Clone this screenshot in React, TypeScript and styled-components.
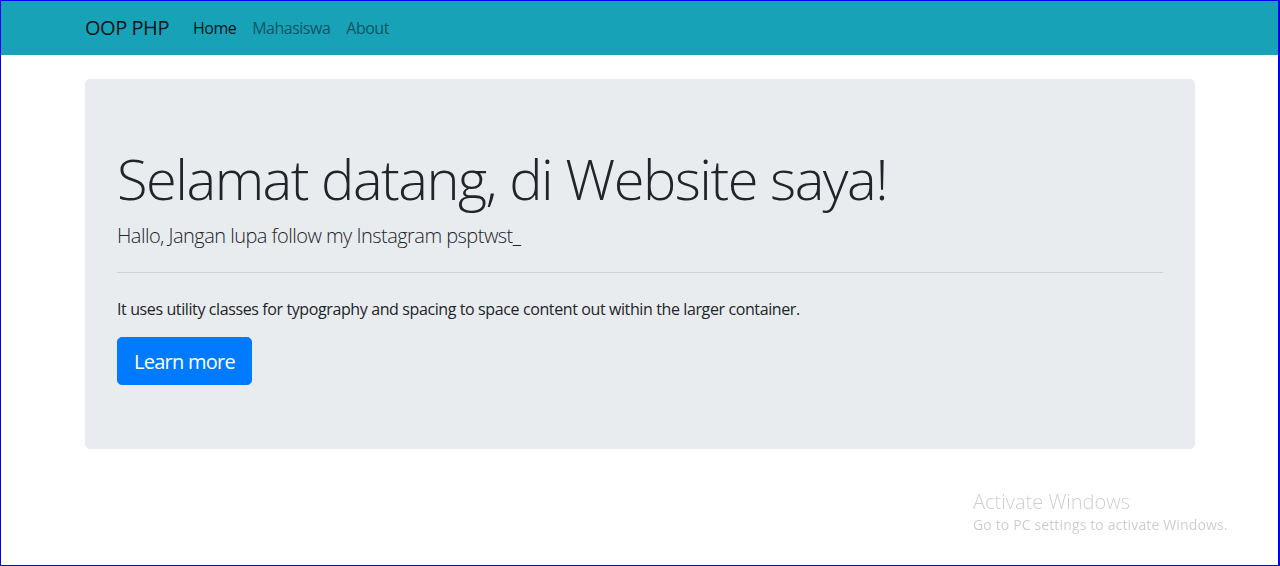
import React from "react";
import styled, { createGlobalStyle } from "styled-components";

const FONT = `"Open Sans", "Noto Sans", "Liberation Sans", sans-serif`;

const Global = createGlobalStyle`
  html, body { margin: 0; padding: 0; }
  body {
    font-family: ${FONT};
    font-size: 16px;
    line-height: 1.5;
    color: #212529;
    background: #fff;
  }
  *, *::before, *::after { box-sizing: border-box; }
`;

const Frame = styled.div`
  position: fixed;
  inset: 0;
  border: 1px solid #0000ff;
  border-right-width: 2px;
  pointer-events: none;
  z-index: 10;
`;

const Container = styled.div`
  max-width: 1140px;
  margin: 0 auto;
  padding: 0 15px;
`;

const NavBar = styled.nav`
  background: #17a2b8;
  height: 55px;
  padding-top: 1px;
`;

const NavInner = styled(Container)`
  display: flex;
  align-items: center;
  height: 100%;
`;

const Brand = styled.a`
  font-size: 20px;
  line-height: 30px;
  letter-spacing: -0.45px;
  color: rgba(0, 0, 0, 0.9);
  margin-right: 16px;
  text-decoration: none;
`;

const NavList = styled.div`
  display: flex;
`;

const NavLink = styled.a<{ $active?: boolean }>`
  padding: 8px;
  font-size: 16px;
  line-height: 24px;
  letter-spacing: -0.5px;
  text-decoration: none;
  color: ${(p) => (p.$active ? "rgba(0,0,0,0.9)" : "rgba(0,0,0,0.5)")};
`;

const Jumbotron = styled.div`
  margin-top: 24px;
  background: #e9ecef;
  border-radius: 4.8px;
  padding: 64px 32px;
`;

const Display = styled.h1`
  margin: 0 0 8px;
  padding-top: 3px;
  font-size: 56px;
  font-weight: 300;
  line-height: 64.2px;
  letter-spacing: -1.5px;
`;

const Lead = styled.p`
  margin: 0 0 16px;
  padding-top: 5px;
  font-size: 20px;
  font-weight: 300;
  line-height: 25px;
  letter-spacing: -0.53px;
`;

const Rule = styled.hr`
  margin: 24px 0;
  border: 0;
  border-top: 1px solid rgba(0, 0, 0, 0.1);
`;

const Text = styled.p`
  margin: 0 0 16px;
  padding-top: 1px;
  font-size: 16px;
  line-height: 23px;
  letter-spacing: -0.39px;
`;

const Button = styled.a`
  display: inline-block;
  background: #007bff;
  border: 1px solid #007bff;
  color: #fff;
  font-size: 20px;
  line-height: 28px;
  letter-spacing: -0.75px;
  padding: 10px 16px 8px;
  border-radius: 4.8px;
  text-decoration: none;
`;

const Watermark = styled.div`
  position: fixed;
  left: 973px;
  top: 489px;
  color: rgba(0, 0, 0, 0.2);
  pointer-events: none;
`;

const WmTitle = styled.div`
  font-size: 20px;
  font-weight: 300;
  line-height: 26px;
`;

const WmSub = styled.div`
  font-size: 14px;
  line-height: 20px;
  letter-spacing: 0.01em;
`;

export default function App() {
  return (
    <>
      <Global />
      <NavBar>
        <NavInner>
          <Brand href="#">OOP PHP</Brand>
          <NavList>
            <NavLink href="#" $active>Home</NavLink>
            <NavLink href="#">Mahasiswa</NavLink>
            <NavLink href="#">About</NavLink>
          </NavList>
        </NavInner>
      </NavBar>
      <Container>
        <Jumbotron>
          <Display>Selamat datang, di Website saya!</Display>
          <Lead>Hallo, Jangan lupa follow my Instagram psptwst_</Lead>
          <Rule />
          <Text>
            It uses utility classes for typography and spacing to space content out within the larger container.
          </Text>
          <Button href="#">Learn more</Button>
        </Jumbotron>
      </Container>
      <Watermark>
        <WmTitle>Activate Windows</WmTitle>
        <WmSub>Go to PC settings to activate Windows.</WmSub>
      </Watermark>
      <Frame />
    </>
  );
}
